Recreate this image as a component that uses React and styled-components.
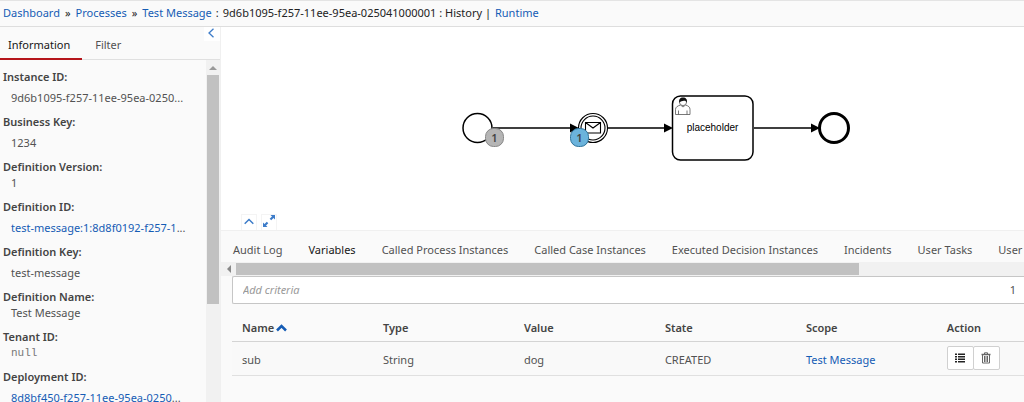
import React from "react";
import styled, { createGlobalStyle } from "styled-components";

const GlobalStyle = createGlobalStyle`
  *, *::before, *::after { box-sizing: border-box; }
  body {
    margin: 0;
    background: #fafafa;
    color: #525252;
    font-family: "Noto Sans", sans-serif;
    font-size: 11px;
    line-height: 16px;
    overflow: hidden;
  }
  button, input { font: inherit; color: inherit; }
`;

const Link = styled.a`
  color: #155cb5;
  text-decoration: none;
`;

const Page = styled.div`
  display: flex;
  flex-direction: column;
  height: 100vh;
`;

const Breadcrumbs = styled.nav`
  display: flex;
  flex: none;
  align-items: center;
  gap: 4px;
  height: 27px;
  padding: 0 3px 2px;
  border-top: 1px solid #e4e4e4;
  border-bottom: 1px solid #dedede;
  color: #222;
  white-space: nowrap;
`;

const Separator = styled.span`
  padding: 0 1px;
`;

const Body = styled.div`
  display: flex;
  flex: 1;
  min-height: 0;
`;

const Sidebar = styled.aside`
  position: relative;
  display: flex;
  flex-direction: column;
  flex: none;
  width: 221px;
  border-right: 1px solid #f0f0f0;
`;

const CollapseButton = styled.button`
  position: absolute;
  top: 0;
  right: 0;
  display: grid;
  place-items: center;
  width: 16px;
  height: 14px;
  padding: 0 2px 2px 0;
  border: 0;
  background: #fff;
  color: #3d7cc9;
`;

const SideTabs = styled.div`
  display: flex;
  flex: none;
  height: 33px;
  border-bottom: 1px solid #e0e0e0;
`;

const SideTab = styled.button`
  height: 33px;
  padding: 5px 12px 0 ${(p) => (p.$active ? "8px" : "13px")};
  border: 0;
  border-bottom: 2px solid ${(p) => (p.$active ? "#b5151b" : "transparent")};
  background: none;
  color: ${(p) => (p.$active ? "#161616" : "#525252")};
`;

const SideBody = styled.div`
  display: flex;
  flex: 1;
  min-height: 0;
`;

const InfoList = styled.dl`
  flex: 1;
  min-width: 0;
  margin: 0;
  padding: 9px 8px 0 3px;
  overflow: hidden;
`;

const Info = styled.div`
  padding-bottom: 8px;
`;

const Label = styled.dt`
  color: #444;
  font-weight: 600;
`;

const Value = styled.dd`
  margin: ${(p) => (p.$spaced ? "5px" : "0")} 0 0 8px;
  white-space: nowrap;
  ${(p) => p.$mono && `font-family: "Liberation Mono", monospace; color: #777;`}
`;

const VerticalBar = styled.div`
  display: flex;
  flex-direction: column;
  flex: none;
  width: 14px;
  padding: 0 1px;
  background: #f1f1f1;
`;

const HorizontalBar = styled.div`
  display: flex;
  flex: none;
  height: 14px;
  padding: 1px 0;
  background: #f1f1f1;
`;

const Arrow = styled.span`
  display: grid;
  place-items: center;
  flex: none;
  width: ${(p) => (p.$wide ? "15px" : "12px")};
  height: ${(p) => (p.$wide ? "12px" : "15px")};
`;

const Track = styled.div`
  flex: 1;
`;

const Thumb = styled.div`
  width: ${(p) => (p.$wide ? "79%" : "100%")};
  height: ${(p) => (p.$wide ? "100%" : "70%")};
  background: #c1c1c1;
`;

const Main = styled.main`
  display: flex;
  flex: 1;
  flex-direction: column;
  min-width: 0;
`;

const Canvas = styled.section`
  position: relative;
  flex: none;
  height: 203px;
  background: #fff;
`;

const Diagram = styled.svg`
  display: block;
  width: 100%;
  height: 100%;
`;

const CanvasTools = styled.div`
  position: absolute;
  left: 20px;
  bottom: 0;
  display: flex;
  gap: 4px;
`;

const ToolButton = styled.button`
  display: grid;
  place-items: center;
  width: 16px;
  height: 16px;
  padding: 0 0 3px;
  border: 1px solid #f4f4f4;
  border-bottom: 0;
  background: #fff;
  color: #3d7cc9;
`;

const Details = styled.section`
  display: flex;
  flex: 1;
  flex-direction: column;
  min-height: 0;
  border-top: 1px solid #f0f0f0;
  overflow: hidden;
`;

const Tabs = styled.div`
  display: flex;
  flex: none;
  gap: 26px;
  height: 31px;
  padding: 6px 0 0 12px;
  overflow: hidden;
`;

const Tab = styled.button`
  flex: none;
  padding: 0;
  border: 0;
  background: none;
  color: ${(p) => (p.$active ? "#161616" : "#525252")};
  white-space: nowrap;
`;

const Results = styled.div`
  padding-left: 11px;
`;

const Search = styled.label`
  display: flex;
  align-items: center;
  height: 28px;
  padding: 0 8px 0 10px;
  border: 1px solid #c6c6c6;
  border-right: 0;
  border-radius: 2px 0 0 2px;
  background: #fff;
`;

const SearchInput = styled.input`
  flex: 1;
  min-width: 0;
  padding: 0;
  border: 0;
  outline: 0;
  background: none;
  &::placeholder { color: #999; font-style: italic; opacity: 1; }
`;

const Table = styled.table`
  width: 100%;
  margin-top: 9px;
  border-collapse: collapse;
  table-layout: fixed;
`;

const HeadCell = styled.th`
  width: ${(p) => (p.$last ? "auto" : "17.8%")};
  height: 28px;
  padding: 2px 0 0 10px;
  border-bottom: 1px solid #d4d4d4;
  color: #444;
  font-weight: 600;
  text-align: left;
`;

const SortIcon = styled.svg`
  margin-left: 2px;
`;

const Cell = styled.td`
  height: 34px;
  padding: 3px 0 0 10px;
  border-bottom: 1px solid #e0e0e0;
  background: #f9f9f9;
`;

const Actions = styled.div`
  display: flex;
  margin-top: -3px;
`;

const ActionButton = styled.button`
  display: grid;
  place-items: center;
  width: 27px;
  height: 24px;
  padding: 0;
  border: 1px solid #d0d0d0;
  border-radius: 2px;
  background: #fff;
  color: #222;
  & + & { margin-left: -1px; color: #666; }
`;

const info = [
  { label: "Instance ID:", value: "9d6b1095-f257-11ee-95ea-0250", spaced: true, short: true },
  { label: "Business Key:", value: "1234", spaced: true },
  { label: "Definition Version:", value: "1" },
  { label: "Definition ID:", value: "test-message:1:8d8f0192-f257-1", spaced: true, link: true, short: true },
  { label: "Definition Key:", value: "test-message", spaced: true },
  { label: "Definition Name:", value: "Test Message" },
  { label: "Tenant ID:", value: "null", mono: true },
  { label: "Deployment ID:", value: "8d8bf450-f257-11ee-95ea-0250", spaced: true, link: true, short: true },
];

const tabs = [
  "Audit Log",
  "Variables",
  "Called Process Instances",
  "Called Case Instances",
  "Executed Decision Instances",
  "Incidents",
  "User Tasks",
  "User Operations",
];

const columns = ["Name", "Type", "Value", "State", "Scope", "Action"];

function Badge({ x, y, fill, stroke }) {
  return (
    <g>
      <rect x={x} y={y} width="18" height="18" rx="8" fill={fill} stroke={stroke} />
      <text x={x + 9} y={y + 13} textAnchor="middle" fontSize="11" fontWeight="600" fill="#444">
        1
      </text>
    </g>
  );
}

function ProcessDiagram() {
  return (
    <Diagram role="img" aria-label="Process diagram">
      <g fill="none" stroke="#000" strokeWidth="1.5">
        <path d="M272 101H350M387 101H444M533 101H590" />
        <circle cx="256.500" cy="101" r="14.5" fill="#fff" />
        <circle cx="372" cy="101" r="14.5" strokeWidth="1.1" fill="#fff" />
        <circle cx="372" cy="101" r="12" strokeWidth="1.1" />
        <path d="M364.5 95.5h15v10.5h-15zM364.5 95.5l7.5 5.5 7.5-5.5" strokeWidth="1.1" />
        <rect x="451.5" y="69" width="80.5" height="64" rx="8" fill="#fff" />
        <circle cx="613" cy="101" r="14.5" strokeWidth="3" fill="#fff" />
      </g>
      <path d="M349 96.5v9l9-4.500zM443 96.5v9l9-4.500zM590 96.5v9l9-4.500z" fill="#000" />
      <g fill="#fff" stroke="#555" strokeWidth=".8">
        <path d="M454.5 87.5v-5c0-2.500 2-3.500 5-4.500l2.500 2 2.500-2c3 1 4.500 2 4.500 4.500v5zM457.5 87.5v-4M466 87.5v-4" />
        <circle cx="462" cy="75" r="3.6" />
        <path d="M458.3 75.5c-.6-3 .8-5 3.700-5s4.500 2 3.800 5c-.8-1.500-1.500-2-3-1.800-1.500.3-3 .2-4.500 1.800z" fill="#111" stroke="none" />
      </g>
      <text x="491.500" y="104" textAnchor="middle" fontFamily="Liberation Sans, sans-serif" fontSize="10" fill="#000">
        placeholder
      </text>
      <Badge x={264.5} y={101.5} fill="#b5b5b5" stroke="#888" />
      <Badge x={349.5} y={101.5} fill="#6bb3dc" stroke="#30749b" />
    </Diagram>
  );
}

export default function App() {
  return (
    <Page>
      <GlobalStyle />
      <Breadcrumbs aria-label="Breadcrumb">
        <Link href="#dashboard">Dashboard</Link>
        <Separator>»</Separator>
        <Link href="#processes">Processes</Link>
        <Separator>»</Separator>
        <Link href="#definition">Test Message</Link>
        <span>:</span>
        <span>9d6b1095-f257-11ee-95ea-025041000001 : History |</span>
        <Link href="#runtime">Runtime</Link>
      </Breadcrumbs>
      <Body>
        <Sidebar>
          <SideTabs>
            <SideTab $active>Information</SideTab>
            <SideTab>Filter</SideTab>
          </SideTabs>
          <CollapseButton aria-label="Collapse sidebar">
            <svg width="8" height="10" viewBox="0 0 8 10" fill="none" stroke="currentColor" strokeWidth="1.3">
              <path d="M6.500 .8L2 5l4.500 4.200" />
            </svg>
          </CollapseButton>
          <SideBody>
            <InfoList>
              {info.map((item) => (
                <Info key={item.label}>
                  <Label>{item.label}</Label>
                  <Value $spaced={item.spaced} $mono={item.mono}>
                    {item.link ? <Link href="#open">{item.value}</Link> : item.value}
                    {item.short && "..."}
                  </Value>
                </Info>
              ))}
            </InfoList>
            <VerticalBar>
              <Arrow>
                <svg width="8" height="4" viewBox="0 0 8 4" fill="#999"><path d="M0 4l4-4 4 4z" /></svg>
              </Arrow>
              <Track><Thumb /></Track>
            </VerticalBar>
          </SideBody>
        </Sidebar>
        <Main>
          <Canvas>
            <ProcessDiagram />
            <CanvasTools>
              <ToolButton aria-label="Collapse diagram">
                <svg width="10" height="7" viewBox="0 0 10 7" fill="none" stroke="currentColor" strokeWidth="1.5">
                  <path d="M.7 5.800L5 1.500l4.300 4.300" />
                </svg>
              </ToolButton>
              <ToolButton aria-label="Maximize diagram">
                <svg width="12" height="12" viewBox="0 0 12 12" fill="currentColor">
                  <path d="M7.500 0H12v4.500l-1.500-1.500-2.300 2.300-1.500-1.500L9 1.500zM4.500 12H0V7.500L1.500 9l2.300-2.300 1.500 1.500L3 10.500z" />
                </svg>
              </ToolButton>
            </CanvasTools>
          </Canvas>
          <Details>
            <Tabs>
              {tabs.map((name) => (
                <Tab key={name} $active={name === "Variables"}>{name}</Tab>
              ))}
            </Tabs>
            <HorizontalBar>
              <Arrow $wide>
                <svg width="4" height="8" viewBox="0 0 4 8" fill="#888"><path d="M4 0L0 4l4 4z" /></svg>
              </Arrow>
              <Track><Thumb $wide /></Track>
            </HorizontalBar>
            <Results>
              <Search>
                <SearchInput placeholder="Add criteria" aria-label="Add criteria" />
                <span>1</span>
              </Search>
              <Table>
                <thead>
                  <tr>
                    {columns.map((name) => (
                      <HeadCell key={name} $last={name === "Action"}>
                        {name}
                        {name === "Name" && (
                          <SortIcon width="11" height="8" viewBox="0 0 11 8" fill="none" stroke="#155cb5" strokeWidth="2.5">
                            <path d="M1 6.500L5.500 2 10 6.500" />
                          </SortIcon>
                        )}
                      </HeadCell>
                    ))}
                  </tr>
                </thead>
                <tbody>
                  <tr>
                    <Cell>sub</Cell>
                    <Cell>String</Cell>
                    <Cell>dog</Cell>
                    <Cell>CREATED</Cell>
                    <Cell><Link href="#scope">Test Message</Link></Cell>
                    <Cell>
                      <Actions>
                        <ActionButton aria-label="Show history">
                          <svg width="10" height="10" viewBox="0 0 10 10" fill="currentColor">
                            <path d="M0 .5h2v1.500H0zM3 .5h7v1.500H3zM0 3h2v1.500H0zM3 3h7v1.500H3zM0 5.500h2V7H0zM3 5.500h7V7H3zM0 8h2v1.500H0zM3 8h7v1.500H3z" />
                          </svg>
                        </ActionButton>
                        <ActionButton aria-label="Delete variable">
                          <svg width="10" height="12" viewBox="0 0 10 12" fill="none" stroke="currentColor">
                            <path d="M.5 2.500h9" strokeWidth="1.500" />
                            <path d="M3.500 2V.8h3V2M1.500 3v8h7V3M3.500 4v6M5 4v6M6.500 4v6" />
                          </svg>
                        </ActionButton>
                      </Actions>
                    </Cell>
                  </tr>
                </tbody>
              </Table>
            </Results>
          </Details>
        </Main>
      </Body>
    </Page>
  );
}
